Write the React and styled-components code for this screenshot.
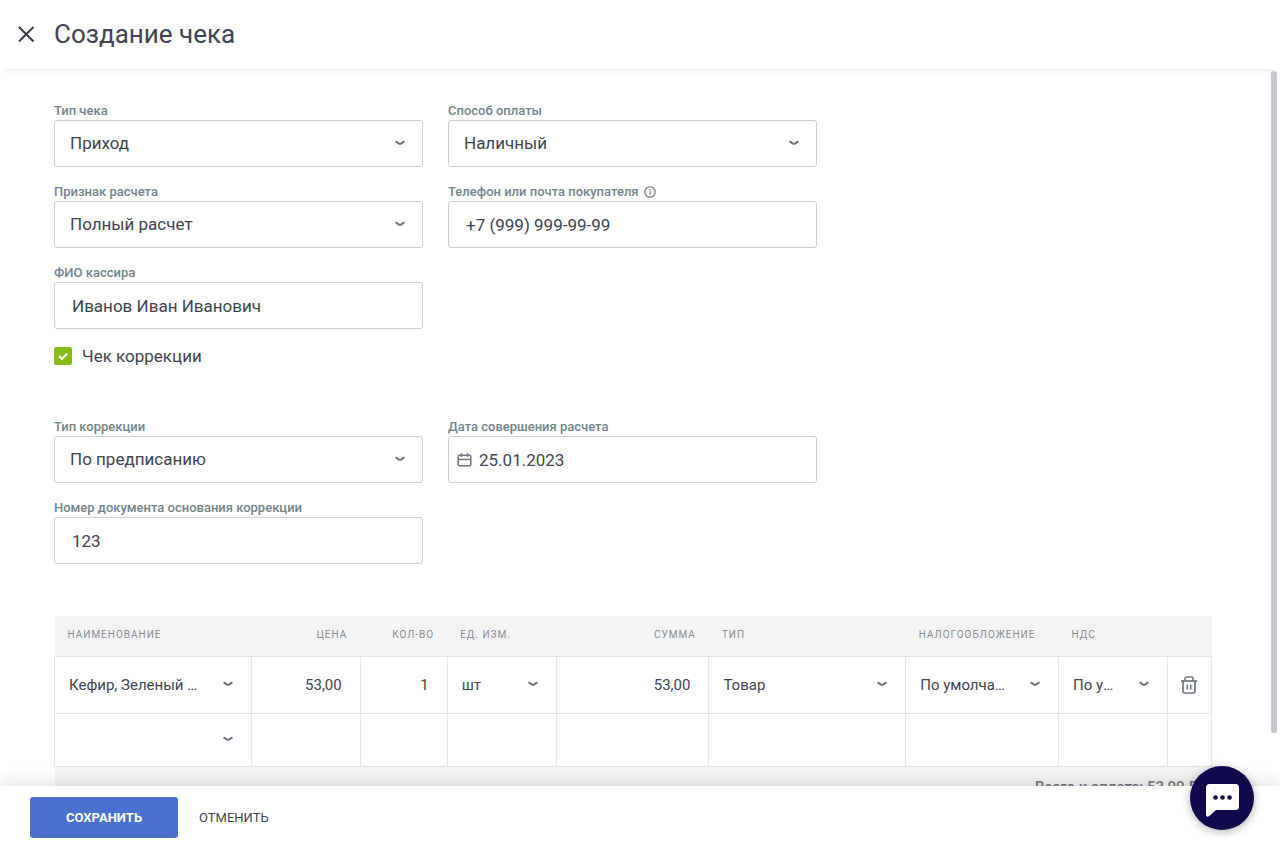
import React, { useState } from "react";
import styled, { createGlobalStyle, css } from "styled-components";

const GlobalStyle = createGlobalStyle`
  *, *::before, *::after { box-sizing: border-box; }
  body {
    margin: 0;
    background: #fff;
    color: #40434f;
    font-family: Roboto, "Liberation Sans", sans-serif;
  }
  button, input, select { font: inherit; color: inherit; }
`;

const Page = styled.div`
  display: flex;
  flex-direction: column;
  height: 100vh;
`;

const Header = styled.header`
  display: flex;
  align-items: center;
  gap: 18px;
  height: 69px;
  flex: none;
  padding: 0 18px 2px;
  box-shadow: 0 6px 5px -5px rgba(0, 0, 0, 0.12);
`;

const IconButton = styled.button`
  display: inline-flex;
  align-items: center;
  justify-content: center;
  width: 18px;
  height: 18px;
  padding: 0;
  border: 0;
  background: none;
  vertical-align: middle;
  cursor: pointer;
`;

const Title = styled.h1`
  margin: 0;
  font-size: 26px;
  line-height: 32px;
  font-weight: 400;
`;

const Body = styled.div`
  display: flex;
  flex: 1;
  min-height: 0;
`;

const Content = styled.main`
  flex: 1;
  min-width: 0;
  padding: 33px 59px 12px 54px;
  overflow-y: auto;
  scrollbar-width: none;
`;

const ScrollTrack = styled.div`
  flex: none;
  width: 9px;
  padding: 2px 3px 0 0;
`;

const ScrollThumb = styled.div`
  height: 92.6%;
  border-radius: 3px;
  background: #c3c9cb;
`;

const Form = styled.form`
  display: flex;
  flex-direction: column;
  gap: 52px;
`;

const Section = styled.div`
  display: flex;
  flex-direction: column;
  gap: 17px;
`;

const Fields = styled.div`
  display: grid;
  grid-template-columns: 1fr 1fr;
  gap: 16px 25px;
  max-width: 763px;
`;

const FieldBox = styled.div`
  grid-column: ${(p) => (p.$alone ? "1" : "auto")};
`;

const Label = styled.label`
  display: flex;
  align-items: center;
  gap: 5px;
  height: 18px;
  padding-bottom: 1px;
  font-size: 13px;
  line-height: 16px;
  font-weight: 500;
  color: #72848a;
`;

const frame = css`
  height: 47px;
  border: 1px solid #cbcfd1;
  border-radius: 3px;
  background: #fff;
`;

const Overlay = styled.div`
  display: grid;
  align-items: center;
  > * { grid-area: 1 / 1; }
  > svg {
    pointer-events: none;
    justify-self: ${(p) => (p.$start ? "start" : "end")};
    margin: ${(p) => (p.$start ? "0 0 0 9px" : "0 17px 0 0")};
  }
`;

const Select = styled.select`
  appearance: none;
  width: 100%;
  min-width: 0;
  padding: 0 52px 2px 15px;
  font-size: 17px;
  outline: none;
  ${frame}
`;

const Input = styled.input`
  width: 100%;
  padding: 0 17px 0 ${(p) => (p.$icon ? "30px" : "17px")};
  font-size: 17px;
  outline: none;
  ${frame}
`;

const CheckLabel = styled.label`
  display: flex;
  align-items: center;
  gap: 10px;
  height: 20px;
  font-size: 17px;
  line-height: 20px;
`;

const CheckWrap = styled.span`
  display: grid;
  place-items: center;
  > * { grid-area: 1 / 1; }
  > svg { pointer-events: none; }
`;

const Checkbox = styled.input`
  appearance: none;
  width: 18px;
  height: 18px;
  margin: 0;
  border-radius: 2px;
  border: 1px solid #86bc18;
  background: ${(p) => (p.checked ? "#86bc18" : "#fff")};
`;

const Table = styled.table`
  width: 100%;
  table-layout: fixed;
  border-collapse: collapse;
  background: #fff;
`;

const Th = styled.th`
  height: 40px;
  padding: 0 13px 2px;
  background: #f4f4f4;
  font-size: 10px;
  font-weight: 400;
  letter-spacing: 1px;
  text-align: ${(p) => (p.$right ? "right" : "left")};
  color: #858b91;
`;

const Row = styled.tr`
  height: ${(p) => (p.$empty ? "53px" : "57px")};
`;

const Td = styled.td`
  padding: 0;
  border: 1px solid #e3e6e7;
  text-align: ${(p) => (p.$center ? "center" : "left")};
  vertical-align: middle;
`;

const CellSelect = styled.select`
  appearance: none;
  width: 100%;
  height: 44px;
  padding: 0 50px 0 14px;
  border: 0;
  background: transparent;
  font-size: 15px;
  text-overflow: ellipsis;
  overflow: hidden;
  white-space: nowrap;
  outline: none;
`;

const CellInput = styled.input`
  width: 100%;
  height: 44px;
  padding: 0 18px 0 14px;
  border: 0;
  background: transparent;
  font-size: 15px;
  text-align: right;
  outline: none;
`;

const Total = styled.td`
  height: 42px;
  padding: 0 13px;
  background: #f4f4f4;
  font-size: 15px;
  font-weight: 500;
  text-align: right;
  color: #72757f;
`;

const Footer = styled.footer`
  position: relative;
  display: flex;
  align-items: flex-start;
  flex: none;
  height: 69px;
  padding: 11px 30px;
  background: #fff;
  box-shadow: 0 0 20px rgba(0, 0, 0, 0.16);
`;

const Button = styled.button`
  height: 41px;
  padding: 0 ${(p) => (p.$primary ? "36px" : "21px")};
  border: 0;
  border-radius: 3px;
  background: ${(p) => (p.$primary ? "#4971d0" : "none")};
  color: ${(p) => (p.$primary ? "#fff" : "inherit")};
  font-size: 13px;
  font-weight: ${(p) => (p.$primary ? 700 : 400)};
  cursor: pointer;
`;

const ChatButton = styled.button`
  position: fixed;
  right: 26px;
  bottom: 25px;
  width: 64px;
  height: 64px;
  padding: 0;
  border: 0;
  border-radius: 50%;
  background: #0f0a4c;
  box-shadow: 0 2px 10px rgba(0, 0, 0, 0.3);
  cursor: pointer;
`;

const Chevron = () => (
  <svg width="12" height="8" viewBox="0 0 12 8" fill="none" aria-hidden="true">
    <path d="M2.2 1.7 L4.6 3.3 Q6 4.1 7.4 3.3 L9.8 1.7" stroke="#6b757e" strokeWidth="2" strokeLinecap="round" />
  </svg>
);

const CloseIcon = () => (
  <svg width="18" height="18" viewBox="0 0 18 18" fill="none" aria-hidden="true">
    <path d="M1 2 L15.500 16.500 M15.500 2 L1 16.500" stroke="#333645" strokeWidth="1.9" />
  </svg>
);

const InfoIcon = () => (
  <svg width="12" height="12" viewBox="0 0 12 12" fill="none" stroke="#72848a" aria-hidden="true">
    <circle cx="6" cy="6" r="5.2" strokeWidth="1.3" />
    <path d="M6 5.3 V8.8 M6 3.1 V4.3" strokeWidth="1.3" />
  </svg>
);

const CalendarIcon = () => (
  <svg width="16" height="16" viewBox="0 0 16 16" fill="none" stroke="#6f7585" aria-hidden="true">
    <rect x="1.2" y="3.2" width="12.6" height="10.6" rx="1.4" strokeWidth="1.5" />
    <path d="M1.2 7.6 H13.8 M4.400 1.2 V5 M10.600 1.2 V5" strokeWidth="1.5" />
  </svg>
);

const TrashIcon = () => (
  <svg width="18" height="18" viewBox="0 0 18 18" fill="none" stroke="#6f7682" aria-hidden="true">
    <path d="M1 5 H17" strokeWidth="1.7" />
    <path d="M5 5 V2.4 Q5 1 6.4 1 H11.6 Q13 1 13 2.4 V5" strokeWidth="1.6" />
    <path d="M3 5 V15.4 Q3 17 4.6 17 H13.4 Q15 17 15 15.4 V5" strokeWidth="1.7" />
    <path d="M7.3 8.5 V13.5 M10.7 8.5 V13.5" strokeWidth="1.6" />
  </svg>
);

const ChatIcon = () => (
  <svg width="64" height="64" viewBox="0 0 64 64" aria-hidden="true">
    <path d="M19.5 18 H45.5 Q49 18 49 21.5 V40.5 Q49 44 45.5 44 H26 L19.5 50 Q16 52 16 48.500 V21.5 Q16 18 19.5 18 Z" fill="#fff" />
    <g fill="#0f0a4c">
      <circle cx="25.500" cy="31.500" r="2.300" />
      <circle cx="32.500" cy="31.500" r="2.300" />
      <circle cx="39.500" cy="31.500" r="2.300" />
    </g>
  </svg>
);

function SelectField({ id, label, value }) {
  return (
    <FieldBox>
      <Label htmlFor={id}>{label}</Label>
      <Overlay>
        <Select id={id} defaultValue={value}>
          <option>{value}</option>
        </Select>
        <Chevron />
      </Overlay>
    </FieldBox>
  );
}

function TextField({ id, label, value, info, icon, alone }) {
  return (
    <FieldBox $alone={alone}>
      <Label htmlFor={id}>
        {label}
        {info && <InfoIcon />}
      </Label>
      <Overlay $start>
        <Input id={id} type="text" defaultValue={value} $icon={Boolean(icon)} />
        {icon}
      </Overlay>
    </FieldBox>
  );
}

const columns = [
  { title: "Наименование", width: 197, kind: "select", value: "Кефир, Зеленый луг" },
  { title: "Цена", width: 109, kind: "number", value: "53,00" },
  { title: "Кол-во", width: 87, kind: "number", value: "1" },
  { title: "Ед. изм.", width: 109, kind: "select", value: "шт" },
  { title: "Сумма", width: 153, kind: "number", value: "53,00" },
  { title: "Тип", width: 197, kind: "select", value: "Товар" },
  { title: "Налогообложение", width: 153, kind: "select", value: "По умолчанию" },
  { title: "НДС", width: 109, kind: "select", value: "По умолчанию" },
];
const ACTION_WIDTH = 44;
const totalWidth = columns.reduce((sum, c) => sum + c.width, ACTION_WIDTH);
const share = (width) => ({ width: `${(width / totalWidth) * 100}%` });

function CellSelectBox({ label, value }) {
  return (
    <Overlay>
      <CellSelect aria-label={label} defaultValue={value}>
        <option>{value}</option>
      </CellSelect>
      <Chevron />
    </Overlay>
  );
}

function ItemsTable() {
  return (
    <Table>
      <colgroup>
        {columns.map((c) => (
          <col key={c.title} style={share(c.width)} />
        ))}
        <col style={share(ACTION_WIDTH)} />
      </colgroup>
      <thead>
        <tr>
          {columns.map((c) => (
            <Th key={c.title} scope="col" $right={c.kind === "number"}>
              {c.title.toUpperCase()}
            </Th>
          ))}
          <Th as="td" />
        </tr>
      </thead>
      <tbody>
        <Row>
          {columns.map((c) => (
            <Td key={c.title}>
              {c.kind === "select" ? (
                <CellSelectBox label={c.title} value={c.value} />
              ) : (
                <CellInput aria-label={c.title} defaultValue={c.value} />
              )}
            </Td>
          ))}
          <Td $center>
            <IconButton type="button" aria-label="Удалить">
              <TrashIcon />
            </IconButton>
          </Td>
        </Row>
        <Row $empty>
          <Td>
            <CellSelectBox label="Наименование" value="" />
          </Td>
          {columns.slice(1).map((c) => (
            <Td key={c.title} />
          ))}
          <Td />
        </Row>
      </tbody>
      <tfoot>
        <tr>
          <Total colSpan={columns.length + 1}>Всего к оплате: 53,00 ₽</Total>
        </tr>
      </tfoot>
    </Table>
  );
}

export default function App() {
  const [correction, setCorrection] = useState(true);
  return (
    <Page>
      <GlobalStyle />
      <Header>
        <IconButton type="button" aria-label="Закрыть">
          <CloseIcon />
        </IconButton>
        <Title>Создание чека</Title>
      </Header>
      <Body>
        <Content>
          <Form id="receipt">
            <Section>
              <Fields>
                <SelectField id="type" label="Тип чека" value="Приход" />
                <SelectField id="payment" label="Способ оплаты" value="Наличный" />
                <SelectField id="sign" label="Признак расчета" value="Полный расчет" />
                <TextField id="contact" label="Телефон или почта покупателя" value="+7 (999) 999-99-99" info />
                <TextField id="cashier" label="ФИО кассира" value="Иванов Иван Иванович" alone />
              </Fields>
              <CheckLabel>
                <CheckWrap>
                  <Checkbox
                    type="checkbox"
                    checked={correction}
                    onChange={(e) => setCorrection(e.target.checked)}
                  />
                  <svg width="18" height="18" viewBox="0 0 18 18" fill="none" aria-hidden="true">
                    <path d="M5 9.2 L8 11.8 L13.200 6.600" stroke="#fff" strokeWidth="2.200" />
                  </svg>
                </CheckWrap>
                Чек коррекции
              </CheckLabel>
            </Section>
            <Fields>
              <SelectField id="correction-type" label="Тип коррекции" value="По предписанию" />
              <TextField
                id="date"
                label="Дата совершения расчета"
                value="25.01.2023"
                icon={<CalendarIcon />}
              />
              <TextField id="doc" label="Номер документа основания коррекции" value="123" alone />
            </Fields>
            <ItemsTable />
          </Form>
        </Content>
        <ScrollTrack>
          <ScrollThumb />
        </ScrollTrack>
      </Body>
      <Footer>
        <Button type="submit" form="receipt" $primary>
          СОХРАНИТЬ
        </Button>
        <Button type="button">ОТМЕНИТЬ</Button>
      </Footer>
      <ChatButton type="button" aria-label="Чат">
        <ChatIcon />
      </ChatButton>
    </Page>
  );
}
